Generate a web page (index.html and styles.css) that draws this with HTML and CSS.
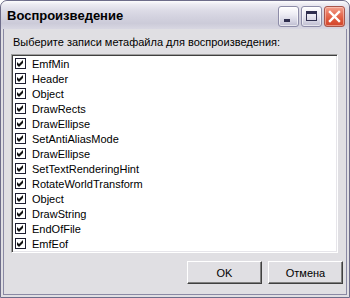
FILE: index.html
```html
<!DOCTYPE html>
<html lang="ru">
<head>
  <meta charset="UTF-8">
  <title>Воспроизведение</title>
  <link rel="stylesheet" href="styles.css">
</head>
<body>

<div class="window">
  <div class="titlebar">
    <span class="title">Воспроизведение</span>
    <div class="caption-buttons">
      <div class="cap-btn">
        <svg width="21" height="21" viewBox="0 0 21 21"><rect x="6" y="13" width="6" height="3" fill="#2e2e4e"/></svg>
      </div>
      <div class="cap-btn">
        <svg width="21" height="21" viewBox="0 0 21 21"><rect x="5.5" y="5.5" width="10" height="9" fill="none" stroke="#2e2e4e" stroke-width="1"/><rect x="5" y="5" width="11" height="3" fill="#2e2e4e"/></svg>
      </div>
      <div class="cap-btn close">
        <svg width="21" height="21" viewBox="0 0 21 21"><path d="M6 6 L15 15 M15 6 L6 15" stroke="#fff" stroke-width="2.4" stroke-linecap="square"/></svg>
      </div>
    </div>
  </div>

  <div class="client">
    <div class="prompt">Выберите записи метафайла для воспроизведения:</div>

    <ul class="checklist">
      <li><span class="check"></span>EmfMin</li>
      <li><span class="check"></span>Header</li>
      <li><span class="check"></span>Object</li>
      <li><span class="check"></span>DrawRects</li>
      <li><span class="check"></span>DrawEllipse</li>
      <li><span class="check"></span>SetAntiAliasMode</li>
      <li><span class="check"></span>DrawEllipse</li>
      <li><span class="check"></span>SetTextRenderingHint</li>
      <li><span class="check"></span>RotateWorldTransform</li>
      <li><span class="check"></span>Object</li>
      <li><span class="check"></span>DrawString</li>
      <li><span class="check"></span>EndOfFile</li>
      <li><span class="check"></span>EmfEof</li>
    </ul>

    <div class="actions">
      <button>OK</button>
      <button>Отмена</button>
    </div>
  </div>
</div>

</body>
</html>
```

FILE: styles.css
```css
* {
  box-sizing: border-box;
}

body {
  margin: 0;
  padding: 0;
  background: #ffffff;
  font-family: 'Liberation Sans', Arial, sans-serif;
  font-size: 11px;
  color: #000;
}

.window {
  width: 350px;
  height: 298px;
  background: #e0dfe3;
  border: 1px solid #6e6d8a;
  border-radius: 7px 7px 0 0;
  display: flex;
  flex-direction: column;
  overflow: hidden;
}

.titlebar {
  height: 28px;
  flex-shrink: 0;
  display: flex;
  align-items: center;
  justify-content: space-between;
  padding: 0 4px 0 6px;
  background: linear-gradient(#fdfdfe 0%, #ecebf2 12%, #dcdbe6 35%, #d2d1de 60%, #cccbd9 80%, #d8d7e2 100%);
  border-radius: 6px 6px 0 0;
}

.title {
  font-weight: bold;
  font-size: 13px;
  color: #000;
  margin-top: 1px;
}

.caption-buttons {
  display: flex;
  gap: 2px;
  margin-top: 2px;
}

.cap-btn {
  width: 21px;
  height: 21px;
  border: 1px solid #8d8ca8;
  border-radius: 3px;
  background: linear-gradient(#ffffff 0%, #ecebf3 40%, #d4d3e2 75%, #bdbcd0 100%);
  box-shadow: inset 0 0 0 1px rgba(255, 255, 255, 0.6);
  position: relative;
}

.cap-btn svg {
  position: absolute;
  left: -1px;
  top: -1px;
}

.cap-btn.close {
  border-color: #a8564c;
  background: linear-gradient(#f4a28e 0%, #e8755d 35%, #dd5438 70%, #d0452c 100%);
  box-shadow: inset 0 0 0 1px rgba(255, 220, 210, 0.5);
}

.client {
  flex: 1;
  margin: 0 2px 2px 2px;
  border: 1px solid #8a89a4;
  border-top: none;
  padding: 7px 3px 0 0;
}

.prompt {
  margin-left: 9px;
  line-height: 13px;
  height: 13px;
}

.checklist {
  list-style: none;
  margin: 5px 0 0 7px;
  padding: 0;
  width: 327px;
  height: 199px;
  background: #fff;
  border: 1px solid;
  border-color: #a0a0a0 #ffffff #ffffff #a0a0a0;
  box-shadow: inset 1px 1px 0 #404040, inset -1px -1px 0 #e6e5ea;
  padding: 1px;
}

.checklist li {
  height: 15px;
  display: flex;
  align-items: center;
  white-space: nowrap;
}

.check {
  width: 11px;
  height: 11px;
  margin: 0 6px 0 2px;
  border: 1px solid #1c1c30;
  background: #fff url("data:image/svg+xml;utf8,<svg xmlns='http://www.w3.org/2000/svg' width='9' height='9'><path d='M1 3 L3 5 L7 1 L7 4 L3 8 L1 6 Z' fill='%23101010'/></svg>") no-repeat 0 0;
  flex-shrink: 0;
}

.actions {
  display: flex;
  justify-content: flex-end;
  gap: 6px;
  margin-top: 8px;
}

button {
  width: 75px;
  height: 23px;
  font-family: 'Liberation Sans', Arial, sans-serif;
  font-size: 11px;
  color: #000;
  background: #e0dfe3;
  border: 1px solid;
  border-color: #ffffff #404040 #404040 #ffffff;
  box-shadow: inset -1px -1px 0 #808080;
  padding: 0;
}
```
